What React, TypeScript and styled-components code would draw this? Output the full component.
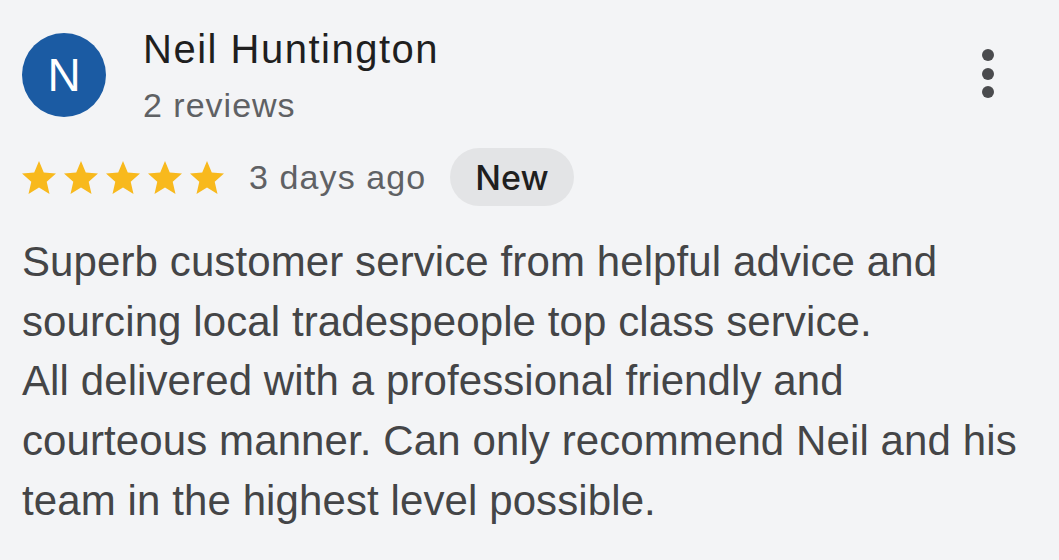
import React from "react";
import styled, { createGlobalStyle } from "styled-components";

const Global = createGlobalStyle`
  html, body { margin: 0; padding: 0; background: #f3f4f6; }
  body { font-family: "Liberation Sans", Arial, sans-serif; }
`;

const Card = styled.div`
  width: 1059px;
  height: 560px;
  box-sizing: border-box;
  padding: 25px 22px 0 22px;
  background: #f3f4f6;
`;

const Header = styled.div`
  display: flex;
  align-items: flex-start;
`;

const Avatar = styled.div`
  width: 84px;
  height: 84px;
  border-radius: 50%;
  background: #1b5ba3;
  color: #fff;
  display: flex;
  align-items: center;
  justify-content: center;
  font-size: 46px;
  margin-top: 8px;
  flex-shrink: 0;
`;

const Who = styled.div`
  display: flex;
  flex-direction: column;
  margin-left: 37px;
  flex: 1;
`;

const Name = styled.div`
  font-size: 40px;
  letter-spacing: 1.5px;
  color: #1f1f1f;
  line-height: 48px;
`;

const Sub = styled.div`
  font-size: 34px;
  letter-spacing: 1px;
  color: #5f6164;
  line-height: 44px;
  margin-top: 10px;
`;

const Kebab = styled.button`
  border: none;
  background: transparent;
  padding: 0;
  margin-top: 24px;
  margin-right: 43px;
  display: flex;
  flex-direction: column;
  gap: 6.5px;
`;

const Dot = styled.span`
  width: 12px;
  height: 12px;
  border-radius: 50%;
  background: #4a4b4e;
`;

const Meta = styled.div`
  display: flex;
  align-items: center;
  margin-top: 21px;
`;

const Stars = styled.div`
  display: flex;
  gap: 8px;
`;

const When = styled.span`
  font-size: 34px;
  letter-spacing: 1.1px;
  color: #5f6164;
  margin-left: 25px;
`;

const Pill = styled.span`
  margin-left: 24px;
  height: 58px;
  padding: 0 25px;
  border-radius: 29px;
  background: #e3e4e6;
  color: #1f1f1f;
  font-family: Inter, "Liberation Sans", Arial, sans-serif;
  font-size: 34px;
  font-weight: 500;
  display: flex;
  align-items: center;
`;

const Body = styled.p`
  margin: 26px 0 0 0;
  font-size: 42px;
  letter-spacing: 0.1px;
  line-height: 59.7px;
  color: #444547;
`;

const Star = () => (
  <svg width="34" height="33" viewBox="2 2 20 19" preserveAspectRatio="none">
    <path
      fill="#f8b91d"
      d="M12 17.27L18.18 21l-1.64-7.03L22 9.24l-7.19-.61L12 2 9.19 8.63 2 9.24l5.46 4.73L5.82 21z"
    />
  </svg>
);

export default function App() {
  return (
    <>
      <Global />
      <Card>
        <Header>
          <Avatar>N</Avatar>
          <Who>
            <Name>Neil Huntington</Name>
            <Sub>2 reviews</Sub>
          </Who>
          <Kebab aria-label="More">
            <Dot />
            <Dot />
            <Dot />
          </Kebab>
        </Header>
        <Meta>
          <Stars>
            {[0, 1, 2, 3, 4].map((i) => (
              <Star key={i} />
            ))}
          </Stars>
          <When>3 days ago</When>
          <Pill>New</Pill>
        </Meta>
        <Body>
          Superb customer service from helpful advice and
          <br />
          sourcing local tradespeople top class service.
          <br />
          All delivered with a professional friendly and
          <br />
          courteous manner. Can only recommend Neil and his
          <br />
          team in the highest level possible.
        </Body>
      </Card>
    </>
  );
}
